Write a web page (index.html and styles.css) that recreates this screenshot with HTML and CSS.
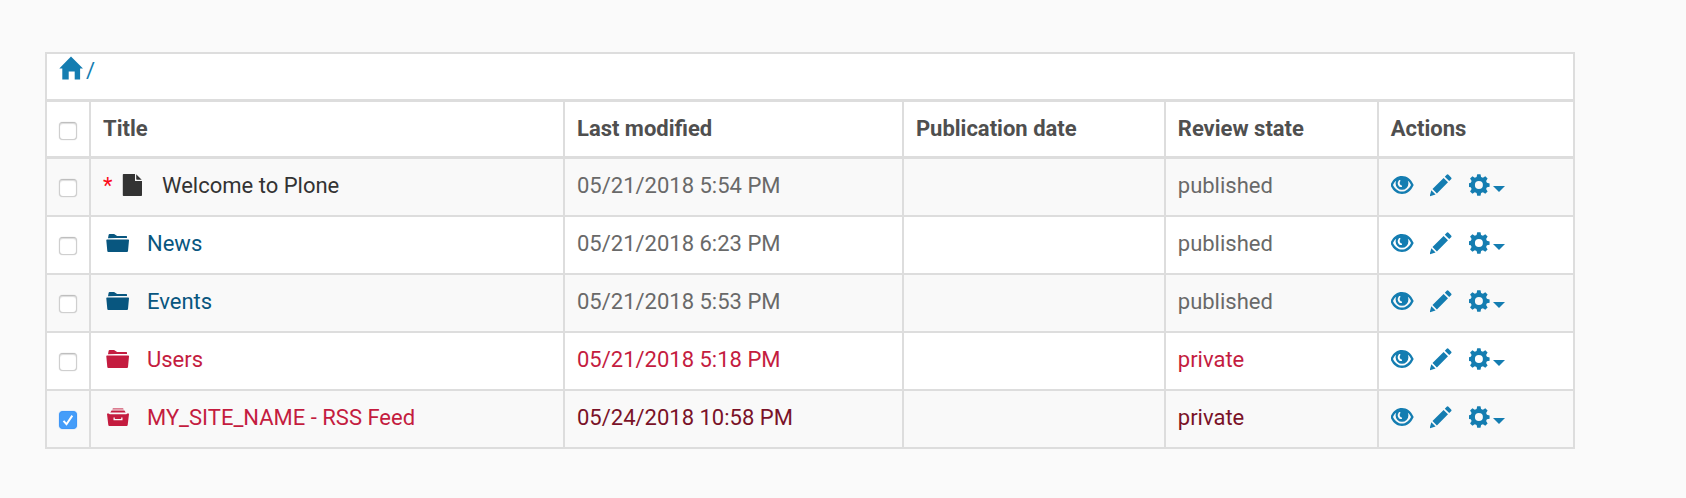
FILE: index.html
```html
<!DOCTYPE html>
<html lang="en">
<head>
<meta charset="utf-8">
<meta name="viewport" content="width=device-width, initial-scale=1">
<title>Contents</title>
<link rel="stylesheet" href="styles.css">
</head>
<body>
<svg class="sprite" aria-hidden="true">
  <symbol id="eye" viewBox="1 0 24 24">
    <path fill-rule="evenodd" d="M.4 12C3 6 7 3 12 3s9 3 11.700 9C21 18 17 21 12 21S3 18 .4 12zM3 12C5 16 8.300 18.600 12 18.600s7-2.600 9-6.600c-.8-1.800-1.800-3.200-3.200-4.200.4.900.6 1.700.6 2.600a6.400 6.400 0 0 1-12.800 0c0-.9.2-1.700.6-2.600-1.400 1-2.400 2.400-3.200 4.200zM8.800 7.400c-1.500 1.700-1.500 4.300.1 5.800.8.800 2 1.100 3 .8l.2-1.300c-1.500-.3-2.400-1.300-2.400-2.700 0-1.100.4-1.700.9-2.300-.4-.8-1.200-.9-1.800-.3z"/>
  </symbol>
  <symbol id="pencil" viewBox="1 0 24 24">
    <path d="M.6 23.300l1.700-6 4.300 4.300zM3.500 16L14.600 4.900l4.400 4.400L7.900 20.400zM15.800 3.700l1.900-1.900q.9-.9 1.800 0l2.600 2.600q.9.900 0 1.800l-1.900 1.900z"/>
  </symbol>
  <symbol id="gear" viewBox="1 0 24 24">
    <path fill-rule="evenodd" d="M9.200 1.300h3.300l.6 2.700 1.800.8 2.400-1.500 2.300 2.300-1.500 2.400.8 1.800 2.700.6v3.300l-2.700.6-.8 1.800 1.500 2.400-2.300 2.300-2.400-1.500-1.800.8-.6 2.700H9.200l-.6-2.700-1.800-.8-2.400 1.500-2.300-2.300 1.500-2.400-.8-1.800-2.700-.6v-3.300l2.700-.6.8-1.800-1.500-2.400 2.300-2.300 2.400 1.500L8.600 4zM10.900 8.100a4 4 0 1 0 0 8 4 4 0 0 0 0-8z"/>
  </symbol>
  <symbol id="folder" viewBox="0 0 26 22">
    <path d="M5 6.300L5.600 3q.1-.9 1-.9h4.500l3 1.900h9.300q.6 0 .6.600v1.300L13 6zM4 7.600H25.400q.7 0 .6.700l-1 10.800q-.1.900-1 .9H5.300q-.9 0-1-.9l-1-10.800q0-.7.700-.7z"/>
  </symbol>
  <symbol id="collection" viewBox="0 0 26 22">
    <path opacity=".75" d="M9.900 2.200h10.200l.6 1.400H9.300z"/>
    <path d="M8.600 4.400h12.800l1.300 2.200H7.300z"/>
    <path fill-rule="evenodd" d="M4.400 7.500h1.300l1 .7h16.600l1-.7h1.300q.4 0 .4.500l-1.300 11q-.2 1-1 1H6.300q-.8 0-1-1L4 8q0-.5.400-.500zM10.500 11.500v2.800h9v-2.800h-1.300v1.400h-6.400v-1.400z"/>
  </symbol>
  <symbol id="file" viewBox="-1 0 26 22">
    <path d="M4.600 0H16v7h7v14.200q0 .8-.8.800H4.600q-.8 0-.8-.8V.8q0-.8.800-.8zM17.200.300l5.500 5.500h-4.700q-.8 0-.8-.8z"/>
  </symbol>
</svg>

<main class="contents">
  <nav class="crumbs" aria-label="Breadcrumb">
    <a href="#" aria-label="Home">
      <svg class="home" viewBox="0 0 24 24"><path d="M12 .5l12 11.900h-2.900V23.500h-5.400V15.600h-6v7.900H3.300V12.400H.3z"/></svg>
      <span>/</span>
    </a>
  </nav>
  <table class="listing">
    <colgroup>
      <col class="col-check"><col class="col-title"><col class="col-modified"><col class="col-published"><col class="col-state"><col class="col-actions">
    </colgroup>
    <thead>
      <tr>
        <th class="check"><input type="checkbox" aria-label="Select all"></th>
        <th>Title</th><th>Last modified</th><th>Publication date</th><th>Review state</th><th>Actions</th>
      </tr>
    </thead>
    <tbody>
      <tr>
        <td class="check"><input type="checkbox" aria-label="Select Welcome to Plone"></td>
        <td><span class="name"><span class="default-page">*</span><a class="page" href="#"><svg class="type"><use href="#file"/></svg>Welcome to Plone</a></span></td>
        <td>05/21/2018 5:54 PM</td><td></td><td>published</td>
        <td><div class="actions"><a href="#" aria-label="View"><svg><use href="#eye"/></svg></a><a href="#" aria-label="Edit"><svg><use href="#pencil"/></svg></a><button type="button" aria-label="More actions"><svg><use href="#gear"/></svg><span class="caret"></span></button></div></td>
      </tr>
      <tr>
        <td class="check"><input type="checkbox" aria-label="Select News"></td>
        <td><span class="name"><a class="published" href="#"><svg class="type"><use href="#folder"/></svg>News</a></span></td>
        <td>05/21/2018 6:23 PM</td><td></td><td>published</td>
        <td><div class="actions"><a href="#" aria-label="View"><svg><use href="#eye"/></svg></a><a href="#" aria-label="Edit"><svg><use href="#pencil"/></svg></a><button type="button" aria-label="More actions"><svg><use href="#gear"/></svg><span class="caret"></span></button></div></td>
      </tr>
      <tr>
        <td class="check"><input type="checkbox" aria-label="Select Events"></td>
        <td><span class="name"><a class="published" href="#"><svg class="type"><use href="#folder"/></svg>Events</a></span></td>
        <td>05/21/2018 5:53 PM</td><td></td><td>published</td>
        <td><div class="actions"><a href="#" aria-label="View"><svg><use href="#eye"/></svg></a><a href="#" aria-label="Edit"><svg><use href="#pencil"/></svg></a><button type="button" aria-label="More actions"><svg><use href="#gear"/></svg><span class="caret"></span></button></div></td>
      </tr>
      <tr class="private">
        <td class="check"><input type="checkbox" aria-label="Select Users"></td>
        <td><span class="name"><a href="#"><svg class="type"><use href="#folder"/></svg>Users</a></span></td>
        <td>05/21/2018 5:18 PM</td><td></td><td>private</td>
        <td><div class="actions"><a href="#" aria-label="View"><svg><use href="#eye"/></svg></a><a href="#" aria-label="Edit"><svg><use href="#pencil"/></svg></a><button type="button" aria-label="More actions"><svg><use href="#gear"/></svg><span class="caret"></span></button></div></td>
      </tr>
      <tr class="private selected">
        <td class="check"><input type="checkbox" aria-label="Select MY_SITE_NAME - RSS Feed" checked></td>
        <td><span class="name"><a href="#"><svg class="type"><use href="#collection"/></svg>MY_SITE_NAME - RSS Feed</a></span></td>
        <td>05/24/2018 10:58 PM</td><td></td><td>private</td>
        <td><div class="actions"><a href="#" aria-label="View"><svg><use href="#eye"/></svg></a><a href="#" aria-label="Edit"><svg><use href="#pencil"/></svg></a><button type="button" aria-label="More actions"><svg><use href="#gear"/></svg><span class="caret"></span></button></div></td>
      </tr>
    </tbody>
  </table>
</main>
</body>
</html>
```
FILE: styles.css
```css
* { box-sizing: border-box; }

body {
  margin: 0;
  background: #fafafa;
  color: #696969;
  font: 22px/30px Roboto, sans-serif;
}

a { color: #147db1; text-decoration: none; }
svg { display: block; fill: currentColor; }
.sprite { position: absolute; width: 0; height: 0; }

.contents {
  margin: 52px 111px 40px 45px;
  border: 2px solid #ddd;
  border-right: 0;
  border-bottom: 0;
  background: #fff;
}

.crumbs {
  min-height: 48px;
  padding: 2px 12px;
  border-right: 2px solid #ddd;
  border-bottom: 3px solid #ddd;
}
.crumbs a { display: inline-flex; gap: 3px; }
.home { width: 24px; height: 24px; }

.listing {
  width: 100%;
  table-layout: fixed;
  border-collapse: separate;
  border-spacing: 0;
}
.col-check { width: 44px; }
.col-title { width: 31.02%; }
.col-modified { width: 22.18%; }
.col-published { width: 17.14%; }
.col-state { width: 13.94%; }

.listing th,
.listing td {
  padding: 12px 12px 14px;
  border-right: 2px solid #ddd;
  border-bottom: 2px solid #ddd;
  text-align: left;
  vertical-align: top;
}
.listing th {
  padding: 12px;
  border-bottom-width: 3px;
  color: #4f4f4f;
  font-weight: 700;
}
.listing tbody tr:nth-child(odd) { background: #f9f9f9; }
.listing .check { padding-top: 20px; padding-bottom: 0; }

input[type="checkbox"] {
  display: block;
  appearance: none;
  width: 18px;
  height: 18px;
  margin: 0;
  border: 1px solid #cfcfcf;
  border-top-color: #bebebe;
  border-radius: 4px;
  background: #fff;
  box-shadow: inset 0 1px 1px #ddd, 0 0 1px #bbb;
}
input[type="checkbox"]:checked {
  border-color: #3f97f7;
  background: #459df9 url("data:image/svg+xml,%3Csvg xmlns='http://www.w3.org/2000/svg' viewBox='0 0 16 16'%3E%3Cpath d='M3.500 8.800l3 3.400L12.300 3.600' fill='none' stroke='white' stroke-width='2'/%3E%3C/svg%3E");
  box-shadow: 0 0 1px #459df9;
}

.name, .name a { display: flex; }
.default-page { width: 15px; color: #fc0d1b; }
.type { flex: none; width: 26px; height: 22px; margin: 3px 18px 0 0; }
.page { color: #333; }
.published { color: #08567f; }
.private, .private .name a { color: #c41c3f; }
.selected { color: #7a1228; }

.actions { display: flex; gap: 15px; margin-top: 2px; color: #147db1; }
.actions svg { width: 24px; height: 24px; }
.actions button {
  display: flex;
  align-items: center;
  padding: 0;
  border: 0;
  background: none;
  color: inherit;
}
.caret {
  margin-top: 7px;
  border: 6px solid transparent;
  border-top-color: currentColor;
  border-bottom: 0;
}
```
